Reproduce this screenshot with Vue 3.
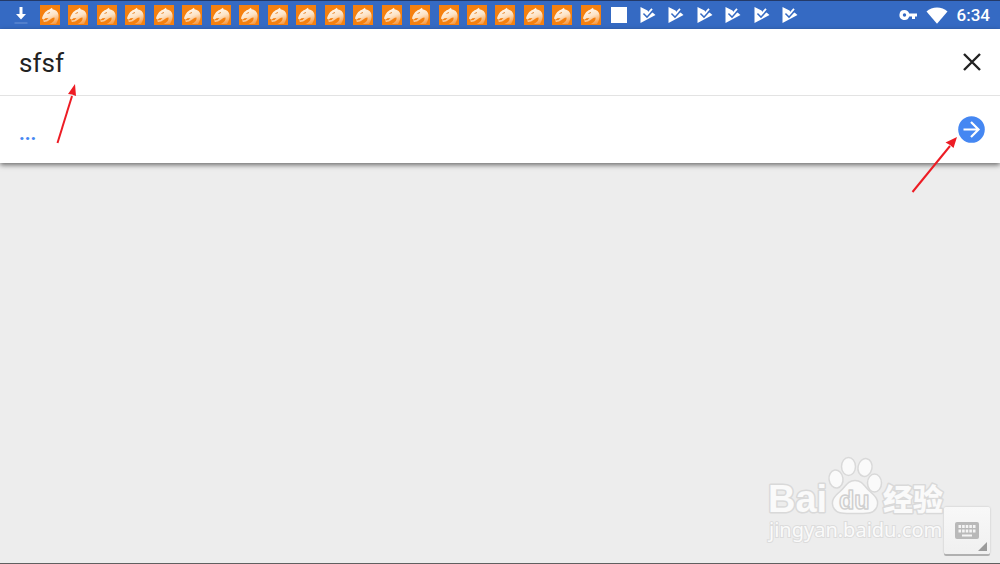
<script setup>
import { ref } from 'vue'

const text = ref('sfsf')
const updates = 20
const tasks = 6
</script>

<template>
  <div class="screen">
    <header class="status">
      <div class="notices">
        <span class="cell">
          <svg width="16" height="20" viewBox="0 0 16 20">
            <path d="M6.500 2h3v7H13l-5 5.500-5-5.500h3.500z" fill="#fff" />
            <path d="M1.500 18h13" stroke="#6f94d6" />
          </svg>
        </span>
        <span v-for="n in updates" :key="'u' + n" class="cell">
          <svg width="20" height="20" viewBox="0 0 20 20">
            <defs>
              <linearGradient id="fur" x1="0.3" y1="0" x2="0.7" y2="1">
                <stop offset="0" stop-color="#fffaf2" />
                <stop offset="0.5" stop-color="#fde3c6" />
                <stop offset="1" stop-color="#f79c45" />
              </linearGradient>
            </defs>
            <rect width="20" height="20" fill="#f5800f" />
            <path d="M2 13.500C3 10 5 6 9 4.800l3-2 .5 1.500c3.500.5 5.500 2.500 6 5.500.5 3-.5 6-2.500 9.200H9.500c3.500-1.500 5.500-3.500 5-6.500-2.500 0-3.500 1.500-5 2.500-1.500 1.300-3 2-5.500 2l-1-1.500 3.500-.5 2-2-3 .2-2 1.500z" fill="url(#fur)" />
            <path d="M7.500 8.500l2.500-1" stroke="#e98a32" />
          </svg>
        </span>
        <span class="cell"><i class="block"></i></span>
        <span v-for="n in tasks" :key="'t' + n" class="cell">
          <svg width="18" height="18" viewBox="0 0 18 18">
            <path d="M1.500 1L8.500 4.500l1 1.500 4 .5 3 2.500-15 8z" fill="#fff" />
            <path d="M9 6.200L13.500 2" stroke="#356ac3" stroke-width="1" />
            <path d="M4.500 7.500L8 11l6-6.500" fill="none" stroke="#356ac3" stroke-width="1.700" />
            <path d="M6 6.500l2 2L13 2.800" fill="none" stroke="#fff" stroke-width="1.800" />
          </svg>
        </span>
      </div>
      <div class="system">
        <svg width="18" height="12" viewBox="0 0 18 12">
          <path fill-rule="evenodd" d="M5.500 1a5 5 0 1 0 4.700 6.500H13V10h3V7.500h2v-3h-7.800A5 5 0 0 0 5.500 1zm0 3.300a1.700 1.700 0 1 1 0 3.400 1.700 1.700 0 0 1 0-3.400z" fill="#fff" />
        </svg>
        <svg width="22" height="17" viewBox="0 0 22 17">
          <path d="M.5 4.500C6-.8 16-.8 21.500 4.500L11 16.800z" fill="#fff" />
        </svg>
        <time>6:34</time>
      </div>
    </header>

    <main class="panel">
      <div class="row entry">
        <input v-model="text" class="field" type="text" aria-label="Text to translate" />
        <button class="icon" type="button" aria-label="Clear" @click="text = ''">
          <svg width="26" height="26" viewBox="0 0 26 26">
            <path d="M5 5l16 16M21 5L5 21" stroke="#222" stroke-width="2.400" fill="none" />
          </svg>
        </button>
      </div>
      <div class="row result">
        <span class="dots">...</span>
        <button class="icon" type="button" aria-label="Go">
          <svg width="27" height="27" viewBox="0 0 27 27">
            <circle cx="13.500" cy="13.500" r="13.300" fill="#4587f2" />
            <path d="M5.500 13.500h15M13 6l7.500 7.500L13 21" stroke="#fff" stroke-width="2.200" fill="none" />
          </svg>
        </button>
      </div>
    </main>

    <svg class="pointer first" width="24" height="64" viewBox="0 0 24 64">
      <path d="M2.500 61L17 14" stroke="#ed1c24" stroke-width="2" />
      <path d="M20 2l1 12-4-1.500-4-.5z" fill="#ed1c24" />
    </svg>
    <svg class="pointer second" width="50" height="60" viewBox="0 0 50 60">
      <path d="M2.500 58L40 12" stroke="#ed1c24" stroke-width="2" />
      <path d="M47 3l-3.500 11-3.500-3-4.500-2.500z" fill="#ed1c24" />
    </svg>

    <button class="keyboard" type="button" aria-label="Keyboard">
      <svg width="46" height="46" viewBox="0 0 46 46">
        <rect x="11" y="15" width="24" height="17" rx="2" fill="#b9b9b9" />
        <path d="M14.500 19.500h17M14.500 24h17" stroke="#f5f5f5" stroke-width="3" stroke-dasharray="2.600 1" />
        <path d="M18 28.500h10" stroke="#f5f5f5" stroke-width="2" />
        <path d="M43 35v9h-9z" fill="#9a9a9a" />
      </svg>
    </button>

    <svg class="mark" width="184" height="94" viewBox="0 0 184 94">
      <g fill="#fafafa" stroke="#d9d9d9" stroke-width="1.500" stroke-linejoin="round">
        <text x="2" y="55" class="latin">Bai</text>
        <ellipse cx="70" cy="22" rx="7" ry="9" transform="rotate(-8 70 22)" />
        <ellipse cx="82.500" cy="9.500" rx="7" ry="9" />
        <ellipse cx="99" cy="10.500" rx="7" ry="9" transform="rotate(12 99 10.500)" />
        <ellipse cx="108.500" cy="26" rx="7" ry="9" />
        <path d="M89 23.500c8 0 9 6 15 11 6 5 9 9 7 15-3 8-11 7-22 7s-19 1-22-7c-2-6 1-10 7-15 6-5 7-11 15-11z" />
        <text x="73" y="52" class="du">du</text>
        <text x="117" y="53" class="han">经验</text>
      </g>
      <text x="3" y="80" class="site">jingyan.baidu.com</text>
    </svg>
  </div>
</template>

<style>
body {
  margin: 0;
}
</style>

<style scoped>
.screen {
  position: relative;
  box-sizing: border-box;
  min-height: 100vh;
  overflow: hidden;
  background: #ededed;
  border-bottom: 1px solid #606060;
  font-family: Roboto, "Noto Sans CJK SC", sans-serif;
}
.status {
  box-sizing: border-box;
  display: flex;
  align-items: center;
  height: 29px;
  padding: 0 10px 0 7px;
  background: #356ac3;
  border-top: 1px solid #243a68;
}
.notices {
  flex: 1;
  display: flex;
  margin-right: 94px;
}
.cell {
  flex: 1;
  display: flex;
  align-items: center;
  justify-content: center;
}
.block {
  width: 16px;
  height: 16px;
  background: #fff;
}
.system {
  display: flex;
  align-items: center;
  gap: 9px;
  color: #fff;
}
.system time {
  font-size: 17px;
  line-height: 28px;
  font-weight: 500;
}
.panel {
  background: #fff;
  box-shadow: 0 2px 5px rgba(0, 0, 0, 0.55);
}
.row {
  box-sizing: border-box;
  display: flex;
  align-items: center;
  justify-content: space-between;
  height: 67px;
  padding: 0 15px 0 19px;
}
.entry {
  border-bottom: 1px solid #e3e3e3;
}
.field {
  flex: 1;
  min-width: 0;
  padding: 2px 0 0;
  border: 0;
  outline: 0;
  background: none;
  color: #222;
  font: 26px/32px Roboto, sans-serif;
}
.icon {
  display: flex;
  padding: 0;
  border: 0;
  background: none;
}
.dots {
  padding-top: 6px;
  color: #4587f2;
  font-size: 20px;
  line-height: 24px;
  font-weight: 700;
}
.pointer {
  position: absolute;
  pointer-events: none;
}
.first {
  left: 55px;
  top: 82px;
}
.second {
  right: 40px;
  top: 134px;
}
.mark {
  position: absolute;
  right: 50px;
  bottom: 12px;
  pointer-events: none;
  overflow: visible;
}
.mark text {
  paint-order: stroke;
}
.latin {
  font: 700 38px "Liberation Sans", sans-serif;
  stroke-width: 3px;
}
.mark .du {
  font: 700 25px "Liberation Sans", sans-serif;
  stroke: #d0d0d0;
  paint-order: normal;
}
.han {
  font: 900 30px "Noto Sans CJK SC", sans-serif;
  stroke-width: 3px;
}
.site {
  fill: #fafafa;
  stroke: #dcdcdc;
  stroke-width: 2px;
  font: 20px "Noto Sans", sans-serif;
}
.keyboard {
  position: absolute;
  right: 10px;
  bottom: 9px;
  display: flex;
  padding: 0 0 1px;
  border: 0;
  border-radius: 2px;
  background: linear-gradient(#f8f8f8, #f0f0f0);
  box-shadow: 0 2px 0 #b0b0b0, 0 0 2px #bbb;
}
</style>
